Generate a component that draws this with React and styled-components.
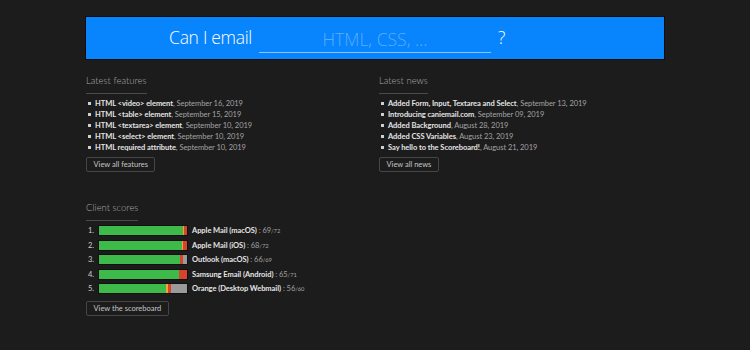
import React from "react";
import styled, { createGlobalStyle } from "styled-components";

const GlobalStyle = createGlobalStyle`
  html, body { margin: 0; padding: 0; background: #1c1c1d; }
  body { font-family: Lato, "Open Sans", Arial, sans-serif; color: #ddd; }
  * { box-sizing: border-box; }
`;

const Page = styled.div`
  width: 750px;
  padding: 17px 86px 20px;
`;

const Banner = styled.form`
  height: 42px;
  background: #0884fc;
  box-shadow: 0 0 0 1px #0d0d0f;
  display: grid;
  grid-template-columns: 1fr 232px 1fr;
  column-gap: 7px;
  align-items: center;
  color: #fff;
  font-family: "Open Sans", Arial, sans-serif;
  font-size: 17.5px;
  font-weight: 300;
`;

const Label = styled.span`
  justify-self: end;
  letter-spacing: -0.3px;
  padding-bottom: 2px;
`;

const Query = styled.input`
  width: 232px;
  height: 26px;
  margin-top: 4px;
  background: transparent;
  border: 0;
  border-bottom: 1px solid #8cc4ff;
  color: #fff;
  font: inherit;
  text-align: center;
  outline: none;
  padding: 0 0 2px;
  &::placeholder { color: #5aaeff; opacity: 1; }
`;

const Mark = styled.span`
  justify-self: start;
  padding-bottom: 2px;
`;

const Columns = styled.div`
  display: grid;
  grid-template-columns: 1fr 1fr;
  column-gap: 8px;
  margin-top: 15.5px;
`;

const Section = styled.section`
  display: flex;
  flex-direction: column;
  align-items: flex-start;
  margin-top: ${(p) => p.$top || 0}px;
`;

const Heading = styled.h2`
  margin: 0;
  font-size: 9.5px;
  line-height: 12px;
  font-weight: 300;
  color: #a9a9a9;
  padding-bottom: 6px;
  border-bottom: 1px solid #4a4a4a;
`;

const List = styled.ul`
  list-style: none;
  margin: 4.4px 0 0;
  padding: 0;
`;

const Item = styled.li`
  display: flex;
  align-items: center;
  font-size: 7.5px;
  letter-spacing: -0.05px;
  line-height: 11px;
  white-space: nowrap;
  &::before {
    content: "";
    width: 3px;
    height: 3px;
    background: #cfcfcf;
    margin: 0 4px 0 2px;
    flex: none;
  }
`;

const Title = styled.a`
  color: #e4e4e4;
  font-weight: 700;
  text-decoration: none;
`;

const Muted = styled.span`
  color: #a3a3a3;
  white-space: pre;
`;

const Button = styled.a`
  display: flex;
  align-items: center;
  height: 15px;
  margin-top: ${(p) => p.$top || 4.4}px;
  padding: 0 6.5px;
  border: 1px solid #464646;
  border-radius: 2px;
  color: #c4c4c4;
  font-size: 7.5px;
  text-decoration: none;
`;

const Scores = styled.ol`
  list-style: none;
  margin: 2px 0 0;
  padding: 0;
`;

const ScoreRow = styled.li`
  display: flex;
  align-items: center;
  height: 14.5px;
  font-size: 7.5px;
  letter-spacing: -0.05px;
  white-space: nowrap;
`;

const Rank = styled.span`
  width: 10px;
  margin-left: 2px;
  color: #cfcfcf;
`;

const Bar = styled.div`
  display: flex;
  width: 90px;
  height: 11px;
  border: 1px solid #111;
  margin-right: 4px;
  flex: none;
`;

const Segment = styled.div`
  height: 100%;
  background: ${(p) => p.$color};
`;

const Small = styled.span`
  font-size: 5.8px;
  color: #a3a3a3;
`;

const COLORS = { g: "#3dba4a", y: "#f2a72b", r: "#d8432c", n: "#9a9a9a" };

const features = [
  ["HTML <video> element", "September 16, 2019"],
  ["HTML <table> element", "September 15, 2019"],
  ["HTML <textarea> element", "September 10, 2019"],
  ["HTML <select> element", "September 10, 2019"],
  ["HTML required attribute", "September 10, 2019"],
];

const news = [
  ["Added Form, Input, Textarea and Select", "September 13, 2019"],
  ["Introducing caniemail.com", "September 09, 2019"],
  ["Added Background", "August 28, 2019"],
  ["Added CSS Variables", "August 23, 2019"],
  ["Say hello to the Scoreboard!", "August 21, 2019"],
];

const scores = [
  { name: "Apple Mail (macOS)", score: 69, total: 72, segs: [["g", 95.6], ["y", 1.2], ["r", 3.2]] },
  { name: "Apple Mail (iOS)", score: 68, total: 72, segs: [["g", 94.2], ["y", 1.6], ["r", 4.2]] },
  { name: "Outlook (macOS)", score: 66, total: 69, segs: [["g", 91.8], ["r", 3.8], ["n", 4.4]] },
  { name: "Samsung Email (Android)", score: 65, total: 71, segs: [["g", 90.4], ["r", 9.6]] },
  { name: "Orange (Desktop Webmail)", score: 56, total: 60, segs: [["g", 76.5], ["y", 2.2], ["r", 3.3], ["n", 18]] },
];

function NewsList({ items }) {
  return (
    <List>
      {items.map(([t, d]) => (
        <Item key={t}>
          <Title href="#">{t}</Title>
          <Muted>, {d}</Muted>
        </Item>
      ))}
    </List>
  );
}

export default function App() {
  return (
    <>
      <GlobalStyle />
      <Page>
        <Banner onSubmit={(e) => e.preventDefault()}>
          <Label>Can I email</Label>
          <Query placeholder="HTML, CSS, ..." />
          <Mark>?</Mark>
        </Banner>
        <Columns>
          <Section>
            <Heading>Latest features</Heading>
            <NewsList items={features} />
            <Button href="#">View all features</Button>
          </Section>
          <Section>
            <Heading>Latest news</Heading>
            <NewsList items={news} />
            <Button href="#">View all news</Button>
          </Section>
        </Columns>
        <Section $top={30}>
          <Heading>Client scores</Heading>
          <Scores>
            {scores.map((s, i) => (
              <ScoreRow key={s.name}>
                <Rank>{i + 1}.</Rank>
                <Bar>
                  {s.segs.map(([c, w], j) => (
                    <Segment key={j} $color={COLORS[c]} style={{ width: `${w}%` }} />
                  ))}
                </Bar>
                <Title href="#">{s.name}</Title>
                <Muted> : {s.score}</Muted>
                <Small>/{s.total}</Small>
              </ScoreRow>
            ))}
          </Scores>
          <Button href="#" $top={5.5}>View the scoreboard</Button>
        </Section>
      </Page>
    </>
  );
}
